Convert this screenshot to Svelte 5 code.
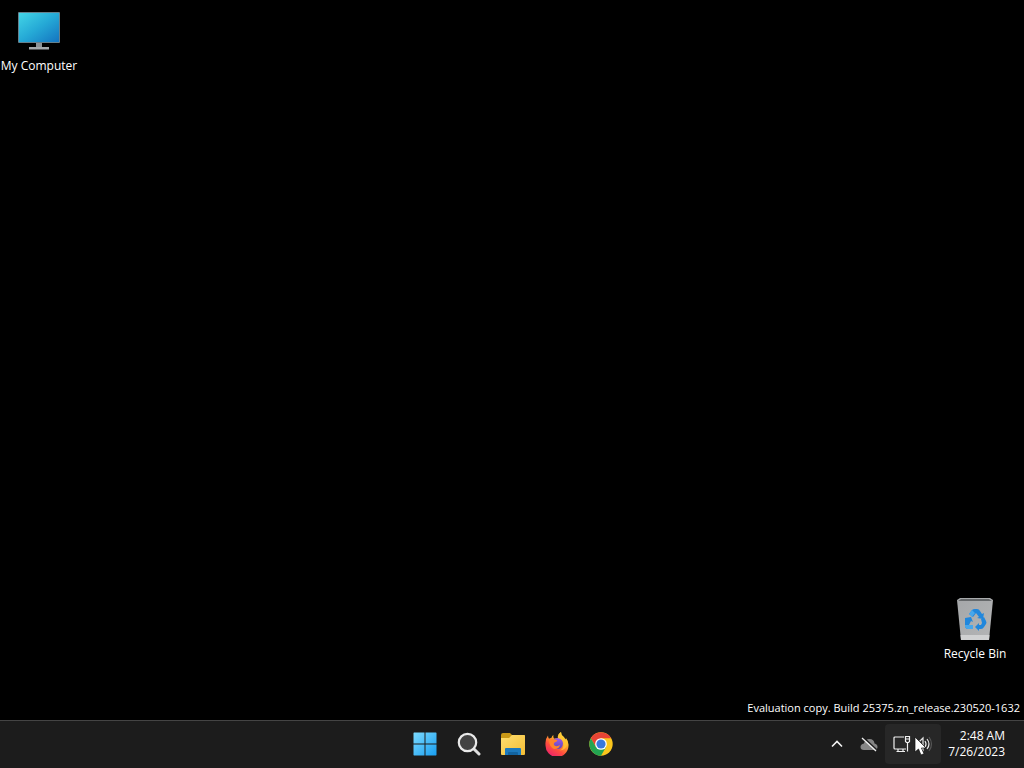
<script lang="ts">
  const time = '2:48 AM';
  const date = '7/26/2023';
  const build = 'Evaluation copy. Build 25375.zn_release.230520-1632';
</script>

<div class="screen">
  <main class="desktop">
    <button class="shortcut">
      <svg width="44" height="44" viewBox="0 0 44 44" aria-hidden="true">
        <defs>
          <linearGradient id="monitor" x1="0" y1="0" x2="1" y2="1">
            <stop offset="0" stop-color="#43d5e6" />
            <stop offset=".5" stop-color="#25a9d6" />
            <stop offset="1" stop-color="#1474c0" />
          </linearGradient>
        </defs>
        <rect x="1" y="4" width="42" height="31" rx="1" fill="#66808c" />
        <rect x="2" y="5" width="40" height="29" fill="url(#monitor)" />
        <path d="M19 35h6v4h-6z" fill="#8b9296" />
        <path d="M12 39h20v2.500H12z" fill="#a4a9ac" />
      </svg>
      <span>My Computer</span>
    </button>

    <div class="corner">
      <button class="shortcut bin">
        <svg width="44" height="44" viewBox="0 0 44 44" aria-hidden="true">
          <defs>
            <linearGradient id="bin" x1="0" y1="0" x2="1" y2="1">
              <stop offset="0" stop-color="#a5a7a9" />
              <stop offset="1" stop-color="#b4b5b6" />
            </linearGradient>
          </defs>
          <path d="M4 3l3-2h30l3 2-4 40H8z" fill="url(#bin)" />
          <path d="M5 4l3-2h28l3 2z" fill="#65686a" />
          <path d="M7.500 38h29l-.500 5H8z" fill="#d0d1d2" />
          <g fill="#2187dc">
            <path d="M16 17l3-4q1-1 3-1h2q2 0 3 2l2 3 2-1-1 6-6-1 2-1-3-4-3 4z" />
            <path d="M12 21l6-1 2 5-2-1-2 4h4v4h-5q-2 0-3-2v-7z" />
            <path d="M28 22l3-2 2 4q1 2 0 3l-2 3q-1 2-3 2h-2v2l-4-4 4-4v2h2l1-2z" />
          </g>
          <path d="M16 17l3-4 3 3-3 4zM12 28h8v4h-5q-2 0-3-2z" fill="#48a7eb" />
        </svg>
        <span>Recycle Bin</span>
      </button>
      <p class="build">{build}</p>
    </div>
  </main>

  <footer class="taskbar">
    <nav class="apps" aria-label="Taskbar">
      <button aria-label="Start">
        <svg width="24" height="24" viewBox="0 0 24 24">
          <defs>
            <linearGradient id="start" x1="0" y1="0" x2="24" y2="24" gradientUnits="userSpaceOnUse">
              <stop offset="0" stop-color="#7fdcff" />
              <stop offset="1" stop-color="#159cf0" />
            </linearGradient>
          </defs>
          <path
            d="M1 .5h10.500V11.500H.5V1zM12.500.5H23l.5.5v10.500h-11zM.5 12.500h11v11H1l-.5-.5zM12.500 12.500h11V23l-.5.5H12.500z"
            fill="url(#start)"
          />
        </svg>
      </button>
      <button aria-label="Search">
        <svg width="24" height="24" viewBox="0 0 24 24">
          <path d="M17 17l5 5" stroke="#dedede" stroke-width="3" stroke-linecap="round" />
          <circle cx="10.500" cy="10.500" r="8.700" fill="#424242" stroke="#e9e9e9" stroke-width="2.200" />
        </svg>
      </button>
      <button aria-label="File Explorer">
        <svg width="26" height="24" viewBox="0 0 26 24">
          <defs>
            <linearGradient id="folder" x1="0" y1="0" x2="1" y2="1">
              <stop offset="0" stop-color="#ffdf70" />
              <stop offset="1" stop-color="#f3bd35" />
            </linearGradient>
          </defs>
          <path d="M1 3q0-2 2-2h7l2 2h12q1 0 1 1v9H1z" fill="#c99816" />
          <path d="M1 6h8l3-3h12q1 0 1 1v18q0 1-1 1H2q-1 0-1-1z" fill="url(#folder)" />
          <path d="M5 23v-6q0-1 1-1h14q1 0 1 1v6z" fill="#1c79bd" />
          <path d="M8 23v-2q0-1 1-1h8q1 0 1 1v2z" fill="#12639f" />
        </svg>
      </button>
      <button aria-label="Firefox">
        <svg width="24" height="24" viewBox="0 0 24 24">
          <defs>
            <linearGradient id="fox" x1=".8" y1="0" x2=".2" y2="1">
              <stop offset="0" stop-color="#fff044" />
              <stop offset=".35" stop-color="#ffac2c" />
              <stop offset=".65" stop-color="#ff4e3e" />
              <stop offset="1" stop-color="#e91d70" />
            </linearGradient>
            <linearGradient id="globe" x1="0" y1="0" x2="0" y2="1">
              <stop offset="0" stop-color="#a05be8" />
              <stop offset="1" stop-color="#5947bd" />
            </linearGradient>
          </defs>
          <path
            d="M3 3.500q0 2 1 3.200l2.500-1q.5-2 2-2.700-.5 2 .5 3.500h4q-1-4 3-6.500 0 3 3 5l1.500 2.500.5-1.500q3 4 2.500 8A11.500 11.500 0 0 1 .5 13Q0 7 3 3.500z"
            fill="url(#fox)"
          />
          <circle cx="12.500" cy="11.500" r="5.500" fill="url(#globe)" />
          <path d="M4 7q3-1 5 .5 2.500 0 3.500 1-1 1.700-3 2-1.500 1.500 0 3 2.500 1.500 5.500-.5-1 4.500-6 4-5-2-5-10z" fill="#ff8428" />
          <path d="M13 6q5 1 5.500 6 .5 5-4 6.500 6 0 8-6.500.5-3-1-5l-.5 1.500Q19.500 6 17 4.500 16 3 16 0q-4 2.500-3 6z" fill="#ffc533" opacity=".8" />
        </svg>
      </button>
      <button aria-label="Chrome">
        <svg width="24" height="24" viewBox="0 0 24 24">
          <circle cx="12" cy="12" r="11.700" fill="#fbc61c" />
          <path d="M1.870 6.150A11.700 11.700 0 0 1 22.130 6.150H12L6.930 14.930z" fill="#e74435" />
          <path d="M1.870 6.150A11.700 11.700 0 0 0 12 23.700l5.070-8.770H6.930z" fill="#23a452" />
          <circle cx="12" cy="12" r="5.850" fill="#fff" />
          <circle cx="12" cy="12" r="4.600" fill="#3878dc" />
        </svg>
      </button>
    </nav>

    <div class="tray">
      <button class="small" aria-label="Show hidden icons">
        <svg width="12" height="8" viewBox="0 0 12 8">
          <path d="M1 6.500l5-5 5 5" fill="none" stroke="#f2f2f2" stroke-width="1.600" />
        </svg>
      </button>
      <button class="small" aria-label="OneDrive">
        <svg width="18" height="16" viewBox="0 0 18 16">
          <path d="M4 14q-3.500 0-3.500-3T4 7.500Q5 3 9.500 3t5 4.500q3 .5 3 3.500t-3 3z" fill="#858585" />
          <path d="M3.500 1.500l13 12" stroke="#1c1c1c" stroke-width="1.500" />
          <path d="M2 2l14 13" stroke="#eee" stroke-width="1.300" />
        </svg>
      </button>
      <button class="status" aria-label="Network and volume">
        <svg width="18" height="18" viewBox="0 0 18 18" fill="none" stroke="#f0f0f0" stroke-width="1.200">
          <path d="M11 2H2q-1 0-1 1v10q0 1 1 1h11M5 14v2.500M10 14v2.500M3.500 16.500h8.500" />
          <path d="M12.500 1.500h4v5l-1 1h-2l-1-1zM13 4h3M14.500 8v8.500" />
        </svg>
        <svg width="18" height="18" viewBox="0 0 18 18" fill="none" stroke="#e6e6e6" stroke-width="1.200">
          <path d="M1 7v4h3l4 4V3L4 7z" />
          <path d="M10 6q2 3 0 6M12 4q4 5 0 10" />
          <path d="M14 2q5 7 0 14" stroke="#555" />
        </svg>
        <svg class="pointer" width="14" height="20" viewBox="0 0 14 20" aria-hidden="true">
          <path d="M1 1v15l3.500-3 2.500 6 3-1.300-2.600-5.700H12z" fill="#fff" stroke="#111" stroke-width=".7" />
        </svg>
      </button>
      <button class="clock">
        <time>{time}</time>
        <time datetime="2023-07-26">{date}</time>
      </button>
    </div>
  </footer>
</div>

<style>
  :global(body) {
    margin: 0;
    background: #000;
  }
  .screen {
    min-height: 100vh;
    display: flex;
    flex-direction: column;
    color: #fff;
    font: 12px/16px 'Open Sans', 'Noto Sans', sans-serif;
  }
  button {
    margin: 0;
    padding: 0;
    border: 0;
    background: none;
    color: inherit;
    font: inherit;
  }
  svg { display: block; }

  .desktop {
    flex: 1;
    display: flex;
    flex-direction: column;
    justify-content: space-between;
    align-items: flex-start;
  }
  .shortcut {
    display: flex;
    flex-direction: column;
    align-items: center;
    gap: 6px;
    width: 78px;
    padding-top: 8px;
    white-space: nowrap;
  }
  .corner {
    align-self: stretch;
    display: flex;
    flex-direction: column;
    align-items: flex-end;
    gap: 38px;
    padding: 0 4px 4px 0;
  }
  .bin {
    gap: 5px;
    margin-right: 6px;
  }
  .build {
    margin: 0;
    font-size: 11px;
  }

  .taskbar {
    display: grid;
    grid-template-columns: 1fr auto 1fr;
    height: 45px;
    padding: 0 0 2px 2px;
    border-top: 1px solid #444;
    background: #1c1c1c;
  }
  .apps {
    grid-column: 2;
    display: flex;
  }
  .apps button {
    display: grid;
    place-items: center;
    width: 44px;
  }
  .tray {
    display: flex;
    align-items: center;
    justify-content: flex-end;
    padding-right: 19px;
  }
  .small {
    display: grid;
    place-items: center;
    width: 32px;
    height: 40px;
  }
  .status {
    position: relative;
    display: flex;
    align-items: center;
    justify-content: center;
    gap: 4px;
    width: 56px;
    height: 40px;
    border-radius: 4px;
    background: #272727;
  }
  .pointer {
    position: absolute;
    left: 29px;
    top: 12px;
  }
  .clock {
    display: flex;
    flex-direction: column;
    align-items: flex-end;
    min-width: 64px;
  }
</style>
